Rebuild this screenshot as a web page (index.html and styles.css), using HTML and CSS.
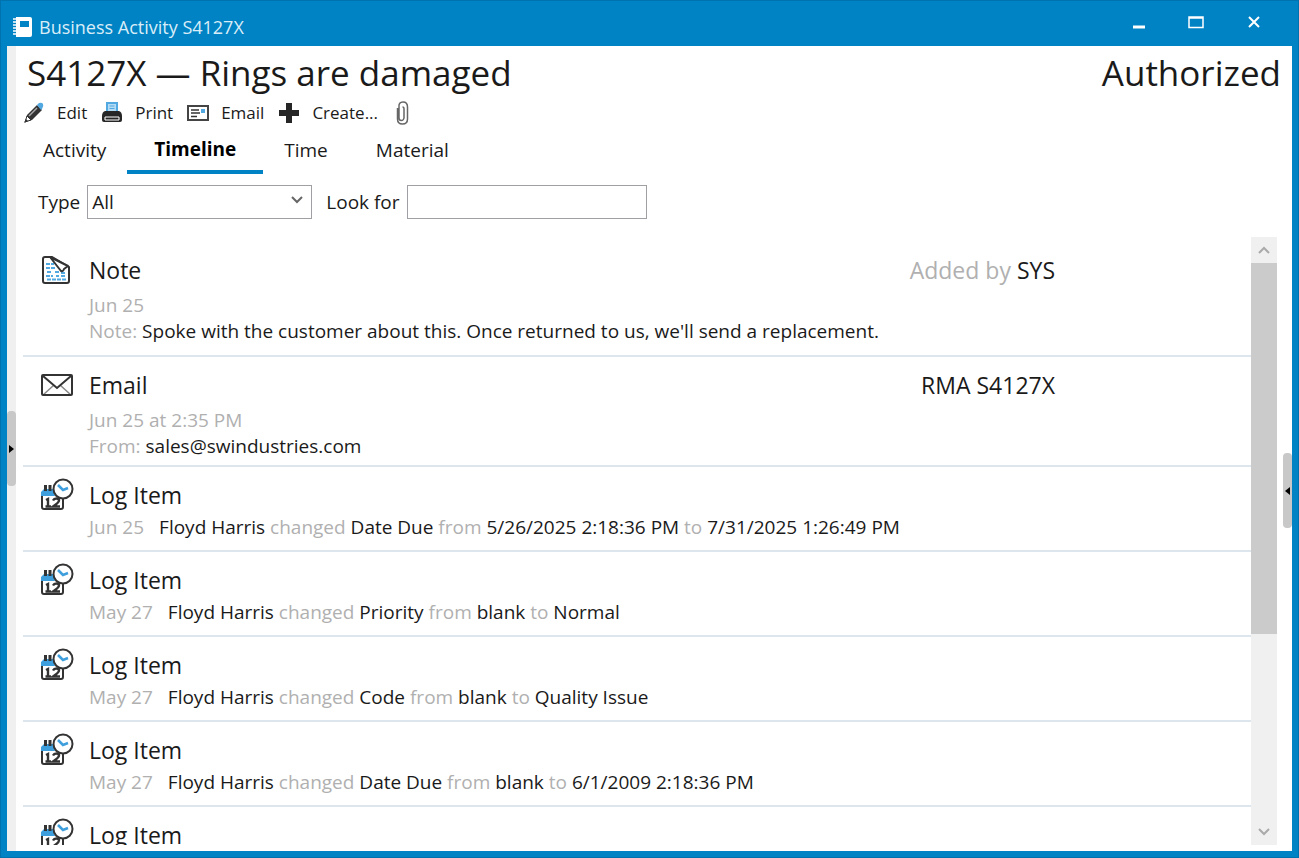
FILE: index.html
```html
<!DOCTYPE html>
<html lang="en">
<head>
    <meta charset="UTF-8">
    <meta name="viewport" content="width=device-width, initial-scale=1.0">
    <title>Business Activity S4127X</title>
    <link rel="stylesheet" href="styles.css">
</head>
<body>
    <!-- Shared icons -->
    <svg class="defs" width="0" height="0" aria-hidden="true">
        <symbol id="log-icon" viewBox="0 0 34 34">
            <path d="M2 17v12q0 2 2 2h17q2 0 2-2V18" fill="#fff" stroke="#333" stroke-width="2"/>
            <path d="M1 18v-4l3-3h9l2 7z" fill="#3f9fdc"/>
            <path d="M5.500 7v6M10 7v6" stroke="#333" stroke-width="3"/>
            <path d="M6 22l2-1v8M5.500 28.500h5.500M13 22.500q1-2 3.500-2t2.500 2q0 2-6 6h7" fill="none" stroke="#333" stroke-width="2.400"/>
            <circle cx="23" cy="11" r="9.500" fill="#fff" stroke="#333" stroke-width="2"/>
            <path d="M18 7l5 5 5-2" fill="none" stroke="#3f9fdc" stroke-width="2.600"/>
        </symbol>
    </svg>

    <div class="window">
        <header class="titlebar">
            <svg width="20" height="20" viewBox="0 0 20 20" aria-hidden="true">
                <path d="M3 0h14q2 0 2 2v16q0 2-2 2H3z" fill="#fff"/>
                <path d="M0 2h4M0 5h4M0 8h4M0 11h4M0 14h4M0 17h4" stroke="#fff" stroke-width="1.500"/>
                <rect x="7" y="4" width="9" height="6" fill="#0083c4"/>
            </svg>
            <span class="caption">Business Activity S4127X</span>
            <div class="window-buttons">
                <button type="button" aria-label="Minimize"><svg width="16" height="14" viewBox="0 0 16 14"><path d="M3 12h12" stroke="#fff" stroke-width="3"/></svg></button>
                <button type="button" aria-label="Maximize"><svg width="16" height="14" viewBox="0 0 16 14"><path d="M1 2h14v10.500H1zM1 3h14" fill="none" stroke="#fff" stroke-width="1.500"/></svg></button>
                <button type="button" aria-label="Close"><svg width="16" height="14" viewBox="0 0 16 14"><path d="M3 2l10 10M13 2L3 12" stroke="#fff" stroke-width="2"/></svg></button>
            </div>
        </header>

        <div class="body">
            <div class="splitter left">
                <button type="button" class="handle" aria-label="Show left panel"><svg width="5" height="8" viewBox="0 0 5 8"><path d="M0 0l5 4-5 4z"/></svg></button>
            </div>

            <main>
                <div class="heading">
                    <h1>S4127X — Rings are damaged</h1>
                    <span>Authorized</span>
                </div>

                <div class="toolbar">
                    <button type="button">
                        <svg width="22" height="22" viewBox="0 0 22 22" aria-hidden="true">
                            <path d="M2 20l2-7L14 3l5 5L9 18z" fill="#333"/>
                            <path d="M2 20l2-6 4 4z" fill="#fff" stroke="#333"/>
                            <path d="M6 14l8-8" stroke="#aaa" stroke-width="1.500"/>
                            <path d="M1 21l2-4 2 2z" fill="#333"/>
                            <path d="M14 3l2-2q3-1 4 1t-1 5l-1 1z" fill="#52a8e0"/>
                        </svg>
                        <span>Edit</span>
                    </button>
                    <button type="button">
                        <svg width="22" height="22" viewBox="0 0 22 22" aria-hidden="true">
                            <path d="M6 10V1h10v9" fill="#b5dcf5" stroke="#52a8e0" stroke-width="2"/>
                            <path d="M8.500 4h5M8.500 6.500h5" stroke="#52a8e0"/>
                            <path d="M4 9h14q3 1 3 5v4q0 2-2 2H3q-2 0-2-2v-4q0-4 3-5z" fill="#262626"/>
                            <path d="M4 15h14v3H4z" fill="none" stroke="#fff"/>
                        </svg>
                        <span>Print</span>
                    </button>
                    <button type="button">
                        <svg width="22" height="22" viewBox="0 0 22 22" aria-hidden="true">
                            <rect x="1" y="4" width="20" height="14" fill="#fff" stroke="#444" stroke-width="2"/>
                            <path d="M4 8h8M4 11h9M4 14.500h6" stroke="#333" stroke-width="1.500"/>
                            <rect x="14" y="7" width="4" height="4" fill="#52a8e0"/>
                        </svg>
                        <span>Email</span>
                    </button>
                    <button type="button">
                        <svg width="22" height="22" viewBox="0 0 22 22" aria-hidden="true">
                            <path d="M11 1v20M1 11h20" stroke="#262626" stroke-width="6"/>
                        </svg>
                        <span>Create...</span>
                    </button>
                    <button type="button" aria-label="Attachments">
                        <svg width="22" height="24" viewBox="-4 0 22 24" aria-hidden="true">
                            <path d="M1.500 7v11q0 5 5 5t5-5V6q0-5-4.500-5T3 6v11q0 2.500 2.300 2.500T8 17V8q0-2-1.500-2" fill="none" stroke="#666" stroke-width="1.500"/>
                        </svg>
                    </button>
                </div>

                <nav class="tabs">
                    <a href="#activity">Activity</a>
                    <a href="#timeline" class="active">Timeline</a>
                    <a href="#time">Time</a>
                    <a href="#material">Material</a>
                </nav>

                <div class="filters">
                    <label for="type">Type</label>
                    <div class="select">
                        <select id="type">
                            <option>All</option>
                            <option>Note</option>
                            <option>Email</option>
                            <option>Log Item</option>
                        </select>
                        <svg width="12" height="8" viewBox="0 0 12 8" aria-hidden="true"><path d="M1 1l5 5 5-5" fill="none" stroke="#666" stroke-width="2"/></svg>
                    </div>
                    <label for="look">Look for</label>
                    <input type="text" id="look">
                </div>

                <div class="timeline">
                    <div class="items">
                        <article class="item note">
                            <svg class="icon" width="34" height="34" viewBox="0 0 34 34" aria-hidden="true">
                                <path d="M5 4h7l17 10v14q0 2-2 2H5q-2 0-2-2V6q0-2 2-2z" fill="#fff" stroke="#333" stroke-width="2"/>
                                <path d="M6 11h8M6 15h10M7 19h5M15 19h4M21 20h4M6 23h7M16 23h3M21 23h5M7 26.500h19" stroke="#52a8e0" stroke-width="2" stroke-dasharray="4 1"/>
                                <path d="M10 4l11 14q2 1 3-2l4-3z" fill="#fff" stroke="#333" stroke-width="2" stroke-linejoin="round"/>
                            </svg>
                            <div class="content">
                                <div class="row"><h2>Note</h2><p class="side"><i>Added by</i> SYS</p></div>
                                <p><i>Jun 25</i></p>
                                <p><i>Note:</i> Spoke with the customer about this. Once returned to us, we'll send a replacement.</p>
                            </div>
                        </article>
                        <article class="item email">
                            <svg class="icon" width="34" height="34" viewBox="0 0 34 34" aria-hidden="true">
                                <path d="M3 27l11-10M31 27L20 17" stroke="#888" stroke-width="1.500"/>
                                <path d="M3 8l14 12L31 8" fill="none" stroke="#333" stroke-width="2"/>
                                <rect x="2" y="7" width="30" height="20" rx="1" fill="none" stroke="#333" stroke-width="2"/>
                            </svg>
                            <div class="content">
                                <div class="row"><h2>Email</h2><p class="side">RMA S4127X</p></div>
                                <p><i>Jun 25 at 2:35 PM</i></p>
                                <p><i>From:</i> sales@swindustries.com</p>
                            </div>
                        </article>
                        <article class="item">
                            <svg class="icon" width="34" height="34" aria-hidden="true"><use href="#log-icon"/></svg>
                            <div class="content">
                                <h2>Log Item</h2>
                                <p><i class="date">Jun 25</i>Floyd Harris <i>changed</i> Date Due <i>from</i> 5/26/2025 2:18:36 PM <i>to</i> 7/31/2025 1:26:49 PM</p>
                            </div>
                        </article>
                        <article class="item">
                            <svg class="icon" width="34" height="34" aria-hidden="true"><use href="#log-icon"/></svg>
                            <div class="content">
                                <h2>Log Item</h2>
                                <p><i class="date">May 27</i>Floyd Harris <i>changed</i> Priority <i>from</i> blank <i>to</i> Normal</p>
                            </div>
                        </article>
                        <article class="item">
                            <svg class="icon" width="34" height="34" aria-hidden="true"><use href="#log-icon"/></svg>
                            <div class="content">
                                <h2>Log Item</h2>
                                <p><i class="date">May 27</i>Floyd Harris <i>changed</i> Code <i>from</i> blank <i>to</i> Quality Issue</p>
                            </div>
                        </article>
                        <article class="item">
                            <svg class="icon" width="34" height="34" aria-hidden="true"><use href="#log-icon"/></svg>
                            <div class="content">
                                <h2>Log Item</h2>
                                <p><i class="date">May 27</i>Floyd Harris <i>changed</i> Date Due <i>from</i> blank <i>to</i> 6/1/2009 2:18:36 PM</p>
                            </div>
                        </article>
                        <article class="item">
                            <svg class="icon" width="34" height="34" aria-hidden="true"><use href="#log-icon"/></svg>
                            <div class="content">
                                <h2>Log Item</h2>
                            </div>
                        </article>
                    </div>
                    <div class="scrollbar">
                        <button type="button" aria-label="Scroll up"><svg width="12" height="8" viewBox="0 0 12 8"><path d="M1 7l5-5 5 5" fill="none" stroke="#aaa" stroke-width="2"/></svg></button>
                        <div class="track"><div class="thumb"></div></div>
                        <button type="button" aria-label="Scroll down"><svg width="12" height="8" viewBox="0 0 12 8"><path d="M1 1l5 5 5-5" fill="none" stroke="#aaa" stroke-width="2"/></svg></button>
                    </div>
                </div>
            </main>

            <div class="splitter right">
                <button type="button" class="handle" aria-label="Show right panel"><svg width="5" height="8" viewBox="0 0 5 8"><path d="M5 0L0 4l5 4z"/></svg></button>
            </div>
        </div>
    </div>
</body>
</html>
```

FILE: styles.css
```css
* {
    box-sizing: border-box;
}

body {
    margin: 0;
    font-family: 'Open Sans', 'Noto Sans', sans-serif;
    font-size: 19px;
    line-height: 26px;
    color: #1a1a1a;
}

h1, h2, p {
    margin: 0;
    font-weight: normal;
}

i {
    font-style: normal;
    color: #b0b0b0;
}

svg {
    display: block;
    flex: none;
}

button {
    padding: 0;
    border: none;
    background: none;
    color: inherit;
    font: inherit;
    cursor: pointer;
}

.defs {
    position: absolute;
}

.window {
    display: flex;
    flex-direction: column;
    height: 100vh;
    padding: 0 6px 6px;
    background-color: #0083c4;
    border: 1px solid #0072ae;
}

.titlebar {
    display: flex;
    align-items: center;
    flex: none;
    height: 45px;
    padding: 6px 30px 0 6px;
    color: #d9edf8;
    font-size: 18px;
}

.caption {
    margin-left: 6px;
}

.window-buttons {
    display: flex;
    gap: 42px;
    margin-left: auto;
    padding-bottom: 10px;
}

.body {
    display: flex;
    flex: 1;
    min-height: 0;
    background-color: #fff;
}

.splitter {
    display: flex;
    flex: none;
    width: 9px;
}

.splitter.left {
    align-items: center;
    background-color: #f0f0f0;
}

.splitter.right {
    align-items: center;
    padding-top: 84px;
}

.handle {
    display: flex;
    align-items: center;
    justify-content: center;
    width: 9px;
    height: 75px;
    border-radius: 4px;
    background-color: #c8c8c8;
}

main {
    display: flex;
    flex-direction: column;
    flex: 1;
    min-width: 0;
    padding: 0 6px 6px 7px;
}

.heading {
    display: flex;
    justify-content: space-between;
    padding-left: 4px;
    font-size: 35px;
    line-height: 54px;
}

.heading h1 {
    font-size: 35px;
}

.heading span {
    margin-right: -4px;
}

.toolbar {
    display: flex;
    gap: 14px;
    height: 26px;
    font-size: 17px;
}

.toolbar button {
    display: flex;
    align-items: center;
    gap: 12px;
}

.tabs {
    display: flex;
    height: 48px;
}

.tabs a {
    padding: 11px 24px 0;
    color: inherit;
    text-decoration: none;
}

.tabs a:first-child {
    padding-left: 20px;
}

.tabs .active {
    margin: 0 -3px;
    padding: 10px 27px 0;
    border-bottom: 4px solid #0083c4;
    color: #000;
    font-weight: bold;
}

.filters {
    display: flex;
    align-items: center;
    height: 34px;
    margin-top: 11px;
    padding-left: 15px;
}

.filters label {
    margin-right: 7px;
}

.select {
    position: relative;
    margin-right: 14px;
}

.select svg {
    position: absolute;
    top: 11px;
    right: 9px;
    pointer-events: none;
}

select, input {
    height: 34px;
    padding: 0 4px;
    border: 1px solid #a0a0a4;
    background-color: #fff;
    color: inherit;
    font: inherit;
}

select {
    width: 225px;
    appearance: none;
}

input {
    width: 240px;
}

.timeline {
    display: flex;
    flex: 1;
    min-height: 0;
    margin-top: 18px;
}

.items {
    flex: 1;
    overflow: hidden;
}

.item {
    display: flex;
    gap: 15px;
    height: 85px;
    padding: 11px 196px 0 17px;
    border-bottom: 2px solid #dce6ec;
}

.item.note {
    height: 120px;
    padding-top: 16px;
}

.item.email {
    height: 110px;
}

.content {
    flex: 1;
    white-space: nowrap;
}

.row {
    display: flex;
    justify-content: space-between;
    margin-bottom: 4px;
}

.item h2, .side {
    font-size: 23px;
    line-height: 34px;
}

.content > h2 {
    margin-bottom: 2px;
}

.email .row, .note .row {
    margin-bottom: 5px;
}

.date {
    margin-right: 15px;
}

.scrollbar {
    display: flex;
    flex-direction: column;
    width: 26px;
    background-color: #f0f0f0;
}

.scrollbar button {
    display: flex;
    align-items: center;
    justify-content: center;
    height: 26px;
}

.track {
    flex: 1;
}

.thumb {
    height: calc(100% * 2 / 3);
    background-color: #cbcbcb;
}
```
